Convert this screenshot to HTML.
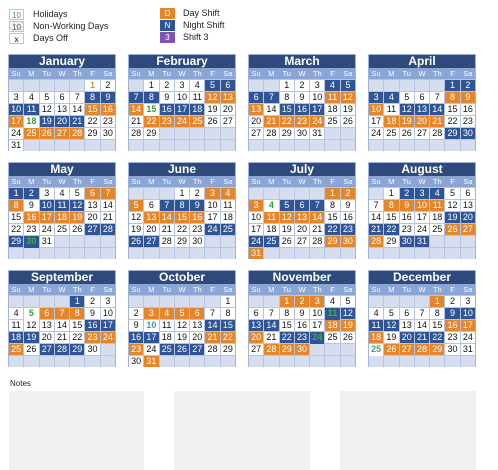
<!DOCTYPE html>
<html><head><meta charset="utf-8"><style>
*{margin:0;padding:0;box-sizing:border-box}
body{width:498px;height:470px;background:#fff;font-family:"Liberation Sans",Arial,sans-serif;position:relative;overflow:hidden}
.lg{position:absolute;font-size:9px;color:#222;line-height:12px}
.lb{position:absolute;width:15px;height:11px;font-size:8px;text-align:center;line-height:11px}
.m{position:absolute;width:108px;height:97px;background:#b6c5e4;border:1px solid #9fb3dc}
.h{height:13px;background:#2e4a7d;color:#fff;font-weight:bold;font-size:12px;text-align:center;line-height:13px}
.w,.g{display:grid;grid-template-columns:repeat(7,1fr);gap:1px}
.w{height:11px;background:#8ba5d5;color:#fff;font-size:7.5px;line-height:11px;text-align:center;margin-bottom:1px}
.w i{font-style:normal}
.g{grid-template-rows:repeat(6,11px);}
.g b{background:#fff;font-size:9px;font-weight:normal;text-align:center;line-height:11px;color:#111}
.g b.e{background:#d5ddef}
.g b.o{background:#e6862b;color:#fff}
.g b.n{background:#2f5596;color:#fff}
.g b.h{color:#3a9a3a;font-weight:bold;background:#fff}
.g b.n.h{background:#2f5596;color:#3ab03a}
.nb{position:absolute;top:391px;height:79px;background:#f1f1f1}
</style></head><body>
<div class="lb" style="left:9px;top:9px;border:1px solid #b6c5e4;color:#3a9a3a">10</div><div class="lg" style="left:33px;top:8px">Holidays</div>
<div class="lb" style="left:9px;top:21px;border:1px solid #b6c5e4;background:repeating-linear-gradient(45deg,#fff 0 2px,#ccc 2px 3px);color:#555">10</div><div class="lg" style="left:33px;top:20px">Non-Working Days</div>
<div class="lb" style="left:9px;top:33px;border:1px solid #b6c5e4">x</div><div class="lg" style="left:33px;top:32px">Days Off</div>
<div class="lb" style="left:160px;top:8px;background:#e6862b;color:#fff">D</div><div class="lg" style="left:183px;top:7px">Day Shift</div>
<div class="lb" style="left:160px;top:20px;background:#2f5596;color:#fff">N</div><div class="lg" style="left:183px;top:19px">Night Shift</div>
<div class="lb" style="left:160px;top:32px;background:#7d55b0;color:#fff">3</div><div class="lg" style="left:183px;top:31px">Shift 3</div>

<div class="m" style="left:8px;top:54px"><div class="h">January</div><div class="w"><i>Su</i><i>M</i><i>Tu</i><i>W</i><i>Th</i><i>F</i><i>Sa</i></div><div class="g"><b class=e></b><b class=e></b><b class=e></b><b class=e></b><b class=e></b><b style="color:#d99a1a;font-weight:bold">1</b><b>2</b><b>3</b><b>4</b><b>5</b><b>6</b><b>7</b><b class=n>8</b><b class=n>9</b><b class=n>10</b><b class=n>11</b><b>12</b><b>13</b><b>14</b><b class=o>15</b><b class=o>16</b><b class=o>17</b><b class=h>18</b><b class=n>19</b><b class=n>20</b><b class=n>21</b><b>22</b><b>23</b><b>24</b><b class=o>25</b><b class=o>26</b><b class=o>27</b><b class=o>28</b><b>29</b><b>30</b><b>31</b><b class=e></b><b class=e></b><b class=e></b><b class=e></b><b class=e></b><b class=e></b></div></div>

<div class="m" style="left:128px;top:54px"><div class="h">February</div><div class="w"><i>Su</i><i>M</i><i>Tu</i><i>W</i><i>Th</i><i>F</i><i>Sa</i></div><div class="g"><b class=e></b><b>1</b><b>2</b><b>3</b><b>4</b><b class=n>5</b><b class=n>6</b><b class=n>7</b><b class=n>8</b><b>9</b><b>10</b><b>11</b><b class=o>12</b><b class=o>13</b><b class=o>14</b><b class=h>15</b><b class=n>16</b><b class=n>17</b><b class=n>18</b><b>19</b><b>20</b><b>21</b><b class=o>22</b><b class=o>23</b><b class=o>24</b><b class=o>25</b><b>26</b><b>27</b><b>28</b><b>29</b><b class=e></b><b class=e></b><b class=e></b><b class=e></b><b class=e></b><b class=e></b><b class=e></b><b class=e></b><b class=e></b><b class=e></b><b class=e></b><b class=e></b></div></div>

<div class="m" style="left:248px;top:54px"><div class="h">March</div><div class="w"><i>Su</i><i>M</i><i>Tu</i><i>W</i><i>Th</i><i>F</i><i>Sa</i></div><div class="g"><b class=e></b><b class=e></b><b>1</b><b>2</b><b>3</b><b class=n>4</b><b class=n>5</b><b class=n>6</b><b class=n>7</b><b>8</b><b>9</b><b>10</b><b class=o>11</b><b class=o>12</b><b class=o>13</b><b>14</b><b class=n>15</b><b class=n>16</b><b class=n>17</b><b>18</b><b>19</b><b>20</b><b class=o>21</b><b class=o>22</b><b class=o>23</b><b class=o>24</b><b>25</b><b>26</b><b>27</b><b>28</b><b>29</b><b>30</b><b>31</b><b class=e></b><b class=e></b><b class=e></b><b class=e></b><b class=e></b><b class=e></b><b class=e></b><b class=e></b><b class=e></b></div></div>

<div class="m" style="left:368px;top:54px"><div class="h">April</div><div class="w"><i>Su</i><i>M</i><i>Tu</i><i>W</i><i>Th</i><i>F</i><i>Sa</i></div><div class="g"><b class=e></b><b class=e></b><b class=e></b><b class=e></b><b class=e></b><b class=n>1</b><b class=n>2</b><b class=n>3</b><b class=n>4</b><b>5</b><b>6</b><b>7</b><b class=o>8</b><b class=o>9</b><b class=o>10</b><b>11</b><b class=n>12</b><b class=n>13</b><b class=n>14</b><b>15</b><b>16</b><b>17</b><b class=o>18</b><b class=o>19</b><b class=o>20</b><b class=o>21</b><b>22</b><b>23</b><b>24</b><b>25</b><b>26</b><b>27</b><b>28</b><b class=n>29</b><b class=n>30</b><b class=e></b><b class=e></b><b class=e></b><b class=e></b><b class=e></b><b class=e></b><b class=e></b></div></div>

<div class="m" style="left:8px;top:162px"><div class="h">May</div><div class="w"><i>Su</i><i>M</i><i>Tu</i><i>W</i><i>Th</i><i>F</i><i>Sa</i></div><div class="g"><b class=n>1</b><b class=n>2</b><b>3</b><b>4</b><b>5</b><b class=o>6</b><b class=o>7</b><b class=o>8</b><b>9</b><b class=n>10</b><b class=n>11</b><b class=n>12</b><b>13</b><b>14</b><b>15</b><b class=o>16</b><b class=o>17</b><b class=o>18</b><b class=o>19</b><b>20</b><b>21</b><b>22</b><b>23</b><b>24</b><b>25</b><b>26</b><b class=n>27</b><b class=n>28</b><b class=n>29</b><b class="n h">30</b><b>31</b><b class=e></b><b class=e></b><b class=e></b><b class=e></b><b class=e></b><b class=e></b><b class=e></b><b class=e></b><b class=e></b><b class=e></b><b class=e></b></div></div>

<div class="m" style="left:128px;top:162px"><div class="h">June</div><div class="w"><i>Su</i><i>M</i><i>Tu</i><i>W</i><i>Th</i><i>F</i><i>Sa</i></div><div class="g"><b class=e></b><b class=e></b><b class=e></b><b>1</b><b>2</b><b class=o>3</b><b class=o>4</b><b class=o>5</b><b>6</b><b class=n>7</b><b class=n>8</b><b class=n>9</b><b>10</b><b>11</b><b>12</b><b class=o>13</b><b class=o>14</b><b class=o>15</b><b class=o>16</b><b>17</b><b>18</b><b>19</b><b>20</b><b>21</b><b>22</b><b>23</b><b class=n>24</b><b class=n>25</b><b class=n>26</b><b class=n>27</b><b>28</b><b>29</b><b>30</b><b class=e></b><b class=e></b><b class=e></b><b class=e></b><b class=e></b><b class=e></b><b class=e></b><b class=e></b><b class=e></b></div></div>

<div class="m" style="left:248px;top:162px"><div class="h">July</div><div class="w"><i>Su</i><i>M</i><i>Tu</i><i>W</i><i>Th</i><i>F</i><i>Sa</i></div><div class="g"><b class=e></b><b class=e></b><b class=e></b><b class=e></b><b class=e></b><b class=o>1</b><b class=o>2</b><b class=o>3</b><b class=h>4</b><b class=n>5</b><b class=n>6</b><b class=n>7</b><b>8</b><b>9</b><b>10</b><b class=o>11</b><b class=o>12</b><b class=o>13</b><b class=o>14</b><b>15</b><b>16</b><b>17</b><b>18</b><b>19</b><b>20</b><b>21</b><b class=n>22</b><b class=n>23</b><b class=n>24</b><b class=n>25</b><b>26</b><b>27</b><b>28</b><b class=o>29</b><b class=o>30</b><b class=o>31</b><b class=e></b><b class=e></b><b class=e></b><b class=e></b><b class=e></b><b class=e></b></div></div>

<div class="m" style="left:368px;top:162px"><div class="h">August</div><div class="w"><i>Su</i><i>M</i><i>Tu</i><i>W</i><i>Th</i><i>F</i><i>Sa</i></div><div class="g"><b class=e></b><b>1</b><b class=n>2</b><b class=n>3</b><b class=n>4</b><b>5</b><b>6</b><b>7</b><b class=o>8</b><b class=o>9</b><b class=o>10</b><b class=o>11</b><b>12</b><b>13</b><b>14</b><b>15</b><b>16</b><b>17</b><b>18</b><b class=n>19</b><b class=n>20</b><b class=n>21</b><b class=n>22</b><b>23</b><b>24</b><b>25</b><b class=o>26</b><b class=o>27</b><b class=o>28</b><b>29</b><b class=n>30</b><b class=n>31</b><b class=e></b><b class=e></b><b class=e></b><b class=e></b><b class=e></b><b class=e></b><b class=e></b><b class=e></b><b class=e></b><b class=e></b></div></div>

<div class="m" style="left:8px;top:270px"><div class="h">September</div><div class="w"><i>Su</i><i>M</i><i>Tu</i><i>W</i><i>Th</i><i>F</i><i>Sa</i></div><div class="g"><b class=e></b><b class=e></b><b class=e></b><b class=e></b><b class=n>1</b><b>2</b><b>3</b><b>4</b><b class=h>5</b><b class=o>6</b><b class=o>7</b><b class=o>8</b><b>9</b><b>10</b><b>11</b><b>12</b><b>13</b><b>14</b><b>15</b><b class=n>16</b><b class=n>17</b><b class=n>18</b><b class=n>19</b><b>20</b><b>21</b><b>22</b><b class=o>23</b><b class=o>24</b><b class=o>25</b><b>26</b><b class=n>27</b><b class=n>28</b><b class=n>29</b><b>30</b><b class=e></b><b class=e></b><b class=e></b><b class=e></b><b class=e></b><b class=e></b><b class=e></b><b class=e></b></div></div>

<div class="m" style="left:128px;top:270px"><div class="h">October</div><div class="w"><i>Su</i><i>M</i><i>Tu</i><i>W</i><i>Th</i><i>F</i><i>Sa</i></div><div class="g"><b class=e></b><b class=e></b><b class=e></b><b class=e></b><b class=e></b><b class=e></b><b>1</b><b>2</b><b class=o>3</b><b class=o>4</b><b class=o>5</b><b class=o>6</b><b>7</b><b>8</b><b>9</b><b class=h style="color:#4a9ab0">10</b><b>11</b><b>12</b><b>13</b><b class=n>14</b><b class=n>15</b><b class=n>16</b><b class=n>17</b><b>18</b><b>19</b><b>20</b><b class=o>21</b><b class=o>22</b><b class=o>23</b><b>24</b><b class=n>25</b><b class=n>26</b><b class=n>27</b><b>28</b><b>29</b><b>30</b><b class=o>31</b><b class=e></b><b class=e></b><b class=e></b><b class=e></b><b class=e></b></div></div>

<div class="m" style="left:248px;top:270px"><div class="h">November</div><div class="w"><i>Su</i><i>M</i><i>Tu</i><i>W</i><i>Th</i><i>F</i><i>Sa</i></div><div class="g"><b class=e></b><b class=e></b><b class=o>1</b><b class=o>2</b><b class=o>3</b><b>4</b><b>5</b><b>6</b><b>7</b><b>8</b><b>9</b><b>10</b><b class="n h">11</b><b class=n>12</b><b class=n>13</b><b class=n>14</b><b>15</b><b>16</b><b>17</b><b class=o>18</b><b class=o>19</b><b class=o>20</b><b>21</b><b class=n>22</b><b class=n>23</b><b class="n h">24</b><b>25</b><b>26</b><b>27</b><b class=o>28</b><b class=o>29</b><b class=o>30</b><b class=e></b><b class=e></b><b class=e></b><b class=e></b><b class=e></b><b class=e></b><b class=e></b><b class=e></b><b class=e></b><b class=e></b></div></div>

<div class="m" style="left:368px;top:270px"><div class="h">December</div><div class="w"><i>Su</i><i>M</i><i>Tu</i><i>W</i><i>Th</i><i>F</i><i>Sa</i></div><div class="g"><b class=e></b><b class=e></b><b class=e></b><b class=e></b><b class=o>1</b><b>2</b><b>3</b><b>4</b><b>5</b><b>6</b><b>7</b><b>8</b><b class=n>9</b><b class=n>10</b><b class=n>11</b><b class=n>12</b><b>13</b><b>14</b><b>15</b><b class=o>16</b><b class=o>17</b><b class=o>18</b><b>19</b><b class=n>20</b><b class=n>21</b><b class=n>22</b><b>23</b><b>24</b><b class=h style="color:#4aa07a">25</b><b class=o>26</b><b class=o>27</b><b class=o>28</b><b class=o>29</b><b>30</b><b>31</b><b class=e></b><b class=e></b><b class=e></b><b class=e></b><b class=e></b><b class=e></b><b class=e></b></div></div>

<div class="lg" style="left:10px;top:378px;font-size:8px">Notes</div>
<div class="nb" style="left:9px;width:135px"></div>
<div class="nb" style="left:174px;width:136px"></div>
<div class="nb" style="left:340px;width:136px"></div>
</body></html>
